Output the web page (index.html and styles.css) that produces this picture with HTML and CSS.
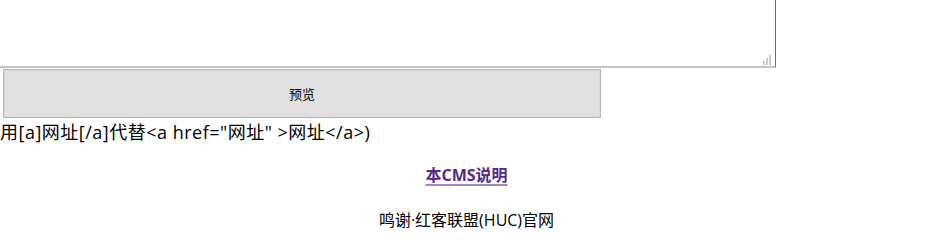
FILE: index.html
```html
<!DOCTYPE html>
<html lang="zh-CN">
<head>
<meta charset="utf-8">
<title>CMS</title>
<link rel="stylesheet" href="styles.css">
</head>
<body>
<div class="editor">
  <div class="textbox"></div>
  <svg class="grip" width="9" height="10" viewBox="0 0 9 10" aria-hidden="true">
    <rect x="0" y="6" width="2" height="4" fill="#c9c9c9"/>
    <rect x="3" y="3" width="2" height="7" fill="#c9c9c9"/>
    <rect x="6" y="0" width="2" height="10" fill="#c9c9c9"/>
  </svg>
</div>
<button class="preview" type="button">预览</button>
<div class="hint">用[a]网址[/a]代替&lt;a href="网址" &gt;网址&lt;/a&gt;)</div>
<div class="about"><a class="about-link" href="#">本CMS说明</a></div>
<div class="credit">鸣谢·红客联盟(HUC)官网</div>
</body>
</html>
```
FILE: styles.css
```css
html, body {
  margin: 0;
  padding: 0;
  background: #ffffff;
}
body {
  font-family: "Open Sans", "Noto Sans CJK SC", sans-serif;
  color: #000000;
  font-size: 16px;
}
.editor {
  position: relative;
  width: 780px;
  height: 108px;
  margin: -40px 0 0 -4px;
}
.textbox {
  box-sizing: border-box;
  width: 100%;
  height: 100%;
  background: #ffffff;
  border-right: 1px solid #707070;
  border-bottom: 2px solid #c4c4c4;
}
.grip {
  position: absolute;
  right: 4px;
  bottom: 3px;
}
.preview {
  display: block;
  box-sizing: border-box;
  width: 598px;
  height: 49px;
  margin: 1px 0 0 3px;
  padding: 0;
  background: #e1e1e1;
  border: 1px solid #b4b4b4;
  box-shadow: inset 0 0 0 1px #dadada;
  font-family: "Noto Sans CJK SC", sans-serif;
  font-size: 13px;
  color: #000000;
}
.hint {
  margin-top: 2px;
  font-size: 18px;
  line-height: 24px;
  letter-spacing: 0.5px;
  white-space: nowrap;
}
.about {
  margin-top: 19px;
  line-height: 24px;
  text-align: center;
}
.about-link {
  color: #56288c;
  font-weight: bold;
  text-decoration: underline;
  text-decoration-color: #a286c4;
  text-decoration-thickness: 2px;
  text-underline-offset: 3px;
}
.credit {
  margin-top: 21px;
  line-height: 24px;
  text-align: center;
}
```
